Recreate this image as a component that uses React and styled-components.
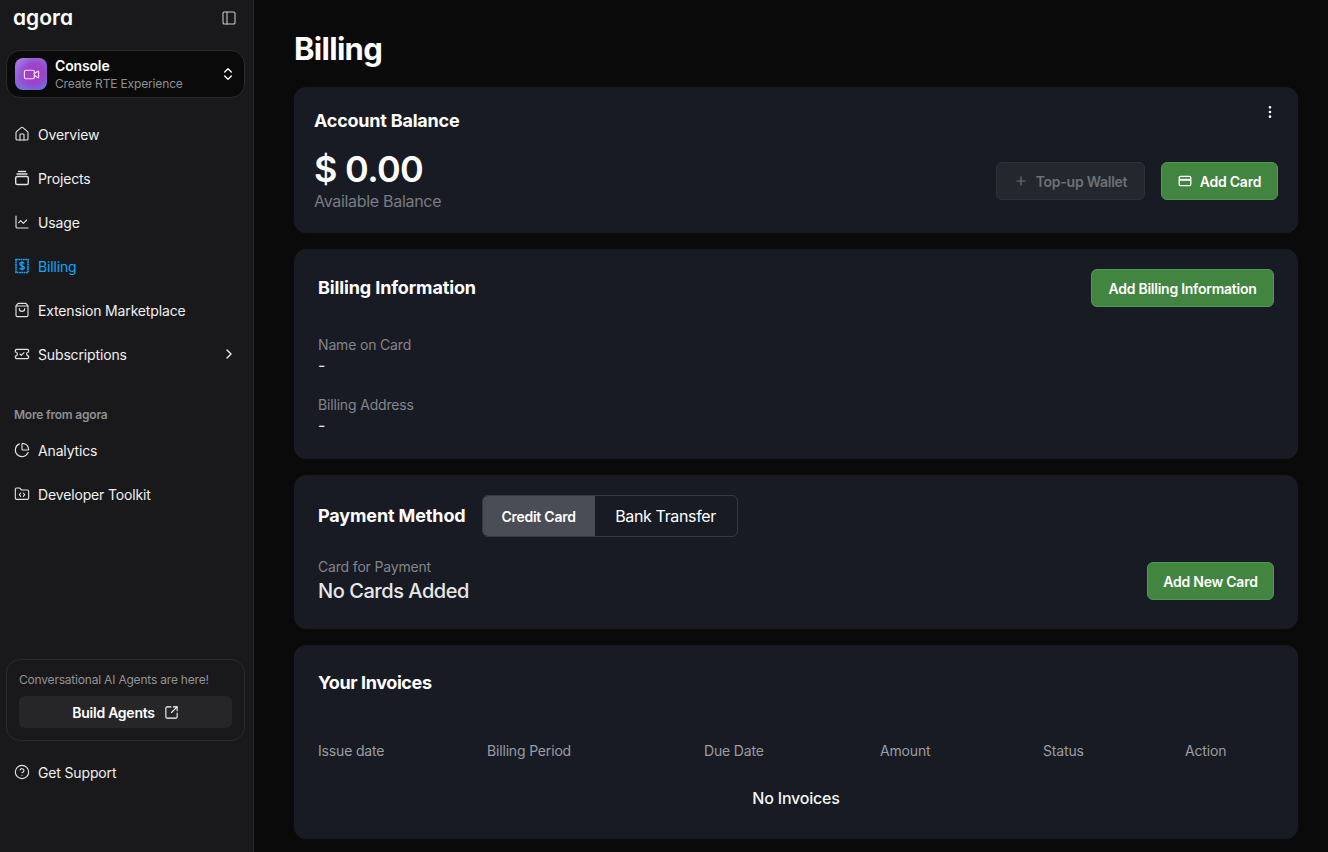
import React from 'react';
import styled, { createGlobalStyle } from 'styled-components';
import {
  PanelLeft,
  ChevronsUpDown,
  ChevronRight,
  Video,
  House,
  ChartLine,
  ShoppingBag,
  TicketCheck,
  ChartPie,
  FolderCode,
  CircleHelp,
  SquareArrowOutUpRight,
  EllipsisVertical,
  Plus,
} from 'lucide-react';

const GlobalStyle = createGlobalStyle`
  html, body {
    margin: 0;
    padding: 0;
    height: 100%;
    background: #0a0a0b;
    overflow: hidden;
  }
  body {
    font-family: Inter, "Liberation Sans", sans-serif;
    color: #fff;
  }
  * { box-sizing: border-box; }
`;

const Layout = styled.div`
  display: flex;
  height: 852px;
`;

const Sidebar = styled.aside`
  width: 254px;
  flex-shrink: 0;
  background: #19191b;
  border-right: 1px solid #2a2a2d;
  padding: 0 8px 0 6px;
  display: flex;
  flex-direction: column;
`;

const LogoRow = styled.div`
  height: 50px;
  display: flex;
  align-items: center;
  justify-content: space-between;
  padding: 0 8px 14px 7px;
  color: #c9c9cb;
`;

const Logo = styled.span`
  font-size: 21px;
  font-weight: 600;
  line-height: 1;
  color: #fff;
  letter-spacing: 0;
  font-feature-settings: 'cv11' 1;
  margin-top: -2px;
`;

const Switcher = styled.div`
  height: 48px;
  background: #0a0a0b;
  border: 1px solid #2b2b2e;
  border-radius: 14px;
  display: flex;
  align-items: center;
  padding: 0 8px;
  gap: 8px;
`;

const AppIcon = styled.div`
  width: 32px;
  height: 32px;
  border-radius: 8px;
  background: radial-gradient(circle at 60% 50%, #a23cc4 0%, #9c45cc 40%, transparent 72%),
    linear-gradient(150deg, #a97ae6 0%, #8d5ed8 50%, #4f86e4 100%);
  display: flex;
  align-items: center;
  justify-content: center;
  color: #f7dffb;
`;

const SwitcherText = styled.div`
  flex: 1;
  display: flex;
  flex-direction: column;
`;

const SwitcherTitle = styled.span`
  font-size: 14px;
  line-height: 18px;
  font-weight: 600;
  letter-spacing: -0.15px;
`;

const SwitcherSub = styled.span`
  font-size: 12px;
  line-height: 17px;
  letter-spacing: -0.15px;
  color: #8f8f94;
`;

const Nav = styled.nav`
  display: flex;
  flex-direction: column;
  margin-top: ${(p) => p.$top || 0}px;
`;

const NavItem = styled.div`
  height: 44px;
  display: flex;
  align-items: center;
  gap: 8px;
  padding: 0 8px;
  font-size: 14px;
  letter-spacing: -0.15px;
  color: ${(p) => (p.$active ? '#0aa8ff' : '#f0f0f1')};

  svg:first-child {
    color: ${(p) => (p.$active ? '#0aa8ff' : '#e2e2e4')};
    flex-shrink: 0;
  }
`;

const NavLabel = styled.span`
  flex: 1;
`;

const SectionLabel = styled.div`
  margin-top: 30px;
  padding-left: 8px;
  height: 18px;
  font-size: 12px;
  line-height: 18px;
  font-weight: 600;
  letter-spacing: -0.2px;
  color: #8f8f94;
`;

const Promo = styled.div`
  margin-top: auto;
  border: 1px solid #2b2b2e;
  border-radius: 14px;
  padding: 11px 12px;
  height: 82px;
`;

const PromoText = styled.div`
  font-size: 12px;
  line-height: 18px;
  letter-spacing: -0.2px;
  color: #929297;
`;

const PromoButton = styled.div`
  margin-top: 7px;
  height: 32px;
  background: #262628;
  border-radius: 6px;
  display: flex;
  align-items: center;
  justify-content: center;
  gap: 9px;
  font-size: 14px;
  font-weight: 600;
  letter-spacing: -0.25px;
  color: #fff;
`;

const SupportWrap = styled.div`
  margin-top: 9px;
  margin-bottom: 58px;
`;

const Main = styled.main`
  flex: 1;
  padding: 29px 30px 0 40px;
  display: flex;
  flex-direction: column;
  gap: 16px;
`;

const PageTitle = styled.h1`
  margin: 0;
  height: 42px;
  font-size: 31px;
  line-height: 40px;
  font-weight: 700;
  letter-spacing: -0.7px;
`;

const Card = styled.section`
  background: #181b23;
  border-radius: 12px;
  height: ${(p) => p.$height}px;
  padding: ${(p) => p.$padding || '20px 24px'};
  display: flex;
  flex-direction: column;
`;

const BalanceTop = styled.div`
  display: flex;
  justify-content: space-between;
  align-items: flex-start;
`;

const SectionTitle = styled.h2`
  margin: 0;
  font-size: 18px;
  line-height: 24px;
  font-weight: 700;
  letter-spacing: ${(p) => p.$spacing ?? -0.13}px;
`;

const MoreButton = styled.div`
  color: #fff;
  margin-top: -5px;
`;

const BalanceBottom = styled.div`
  display: flex;
  justify-content: space-between;
  align-items: flex-end;
`;

const Amount = styled.div`
  font-size: 36px;
  line-height: 42px;
  font-weight: 600;
  letter-spacing: -0.7px;
  margin-top: 15px;
`;

const AmountLabel = styled.div`
  font-size: 16px;
  line-height: 20px;
  margin-top: 1px;
  color: #787b82;
  letter-spacing: -0.3px;
`;

const Actions = styled.div`
  display: flex;
  gap: 16px;
  margin-bottom: 11px;
`;

const Button = styled.button`
  width: ${(p) => p.$width}px;
  height: 38px;
  padding: 0;
  display: flex;
  align-items: center;
  justify-content: center;
  gap: 8px;
  border-radius: 6px;
  font-family: inherit;
  font-size: 14px;
  font-weight: 600;
  letter-spacing: -0.25px;
  background: ${(p) => (p.$disabled ? '#24272e' : '#428541')};
  border: 1px solid ${(p) => (p.$disabled ? '#2e3138' : '#4f9a4e')};
  color: ${(p) => (p.$disabled ? '#6e7076' : '#fff')};
`;

const HeaderRow = styled.div`
  display: flex;
  align-items: center;
  justify-content: space-between;
`;

const Field = styled.div`
  margin-top: ${(p) => p.$top}px;
`;

const FieldLabel = styled.div`
  font-size: 14px;
  line-height: 20px;
  color: #82858c;
  letter-spacing: -0.17px;
`;

const FieldValue = styled.div`
  font-size: 16px;
  line-height: 20px;
  color: #e6e6e8;
`;

const PaymentHead = styled.div`
  display: flex;
  align-items: center;
  gap: 16px;
`;

const Segmented = styled.div`
  display: flex;
  height: 42px;
  border: 1px solid #363a43;
  border-radius: 6px;
  overflow: hidden;
`;

const Segment = styled.div`
  display: flex;
  align-items: center;
  justify-content: center;
  width: ${(p) => p.$width}px;
  background: ${(p) => (p.$active ? '#4a4d55' : 'transparent')};
  font-size: ${(p) => (p.$active ? 14 : 16)}px;
  font-weight: ${(p) => (p.$active ? 600 : 400)};
  letter-spacing: ${(p) => (p.$active ? -0.25 : -0.35)}px;
`;

const PaymentBottom = styled.div`
  display: flex;
  justify-content: space-between;
  align-items: center;
  margin-top: 20px;
`;

const NoCards = styled.div`
  font-size: 20px;
  line-height: 28px;
  font-weight: 500;
  letter-spacing: -0.45px;
  color: #e8e8ea;
`;

const InvoiceHead = styled.div`
  display: grid;
  grid-template-columns: 169px 217px 176px 163px 142px 1fr;
  margin-top: 46px;
  font-size: 14px;
  line-height: 20px;
  color: #9a9da4;
  letter-spacing: -0.17px;
`;

const Empty = styled.div`
  margin-top: 27px;
  text-align: center;
  font-size: 16px;
  line-height: 20px;
  font-weight: 500;
  letter-spacing: -0.2px;
  color: #f4f4f5;
`;

// lucide has no receipt with a dashed edge like the reference
const BillingIcon = () => (
  <svg width="16" height="16" viewBox="0 0 16 16" fill="none" stroke="currentColor" strokeWidth="1.6">
    <rect x="2" y="1.5" width="12" height="13" strokeDasharray="1.8 0.5" />
    <path d="M10.2 5.4c-.3-.7-1-1-2.2-1-1.3 0-2.2.5-2.2 1.6 0 2.3 4.5 1.2 4.5 3.6 0 1.1-1 1.7-2.3 1.7-1.2 0-2-.4-2.3-1.2M8 3.2v9.4" strokeWidth="1.3" />
  </svg>
);

// stacked cards
const ProjectsIcon = () => (
  <svg width="16" height="16" viewBox="0 0 16 16" fill="none" stroke="currentColor" strokeWidth="1.4" strokeLinecap="round">
    <path d="M4.5 1.5h7M3 4h10" />
    <rect x="1.7" y="6.5" width="12.6" height="8" rx="1.6" />
  </svg>
);

// card with the thick stripe
const CardIcon = () => (
  <svg width="14" height="14" viewBox="0 0 14 14" fill="none" stroke="currentColor" strokeWidth="1.3">
    <rect x="1.2" y="2.4" width="11.6" height="9.2" rx="1.4" />
    <path d="M1.2 5.8h11.6" strokeWidth="2" />
  </svg>
);

const mainNav = [
  { label: 'Overview', icon: <House size={16} strokeWidth={1.7} /> },
  { label: 'Projects', icon: <ProjectsIcon /> },
  { label: 'Usage', icon: <ChartLine size={16} strokeWidth={1.7} /> },
  { label: 'Billing', icon: <BillingIcon />, active: true },
  { label: 'Extension Marketplace', icon: <ShoppingBag size={16} strokeWidth={1.7} /> },
  { label: 'Subscriptions', icon: <TicketCheck size={16} strokeWidth={1.7} />, arrow: true },
];

const moreNav = [
  { label: 'Analytics', icon: <ChartPie size={16} strokeWidth={1.7} /> },
  { label: 'Developer Toolkit', icon: <FolderCode size={16} strokeWidth={1.7} /> },
];

const invoiceColumns = ['Issue date', 'Billing Period', 'Due Date', 'Amount', 'Status', 'Action'];

const renderNav = (items) =>
  items.map((item) => (
    <NavItem key={item.label} $active={item.active}>
      {item.icon}
      <NavLabel>{item.label}</NavLabel>
      {item.arrow && <ChevronRight size={16} />}
    </NavItem>
  ));

const App = () => {
  return (
    <Layout>
      <GlobalStyle />
      <Sidebar>
        <LogoRow>
          <Logo>agora</Logo>
          <PanelLeft size={16} strokeWidth={1.6} />
        </LogoRow>
        <Switcher>
          <AppIcon>
            <Video size={17} strokeWidth={1.7} />
          </AppIcon>
          <SwitcherText>
            <SwitcherTitle>Console</SwitcherTitle>
            <SwitcherSub>Create RTE Experience</SwitcherSub>
          </SwitcherText>
          <ChevronsUpDown size={16} />
        </Switcher>
        <Nav $top={14}>{renderNav(mainNav)}</Nav>
        <SectionLabel>More from agora</SectionLabel>
        <Nav $top={4}>{renderNav(moreNav)}</Nav>
        <Promo>
          <PromoText>Conversational AI Agents are here!</PromoText>
          <PromoButton>
            Build Agents
            <SquareArrowOutUpRight size={15} strokeWidth={1.7} />
          </PromoButton>
        </Promo>
        <SupportWrap>
          <NavItem>
            <CircleHelp size={16} strokeWidth={1.7} />
            <NavLabel>Get Support</NavLabel>
          </NavItem>
        </SupportWrap>
      </Sidebar>

      <Main>
        <PageTitle>Billing</PageTitle>

        <Card $height={146} $padding="22px 20px 0 20px">
          <BalanceTop>
            <SectionTitle $spacing={-0.22}>Account Balance</SectionTitle>
            <MoreButton>
              <EllipsisVertical size={16} />
            </MoreButton>
          </BalanceTop>
          <BalanceBottom>
            <div>
              <Amount>$ 0.00</Amount>
              <AmountLabel>Available Balance</AmountLabel>
            </div>
            <Actions>
              <Button $disabled $width={149}>
                <Plus size={14} />
                Top-up Wallet
              </Button>
              <Button $width={117}>
                <CardIcon />
                Add Card
              </Button>
            </Actions>
          </BalanceBottom>
        </Card>

        <Card $height={210}>
          <HeaderRow>
            <SectionTitle>Billing Information</SectionTitle>
            <Button $width={183}>Add Billing Information</Button>
          </HeaderRow>
          <Field $top={28}>
            <FieldLabel>Name on Card</FieldLabel>
            <FieldValue>-</FieldValue>
          </Field>
          <Field $top={20}>
            <FieldLabel>Billing Address</FieldLabel>
            <FieldValue>-</FieldValue>
          </Field>
        </Card>

        <Card $height={154}>
          <PaymentHead>
            <SectionTitle>Payment Method</SectionTitle>
            <Segmented>
              <Segment $active $width={112}>Credit Card</Segment>
              <Segment $width={142}>Bank Transfer</Segment>
            </Segmented>
          </PaymentHead>
          <PaymentBottom>
            <div>
              <FieldLabel>Card for Payment</FieldLabel>
              <NoCards>No Cards Added</NoCards>
            </div>
            <Button $width={127}>Add New Card</Button>
          </PaymentBottom>
        </Card>

        <Card $height={194} $padding="26px 24px">
          <SectionTitle $spacing={-0.4}>Your Invoices</SectionTitle>
          <InvoiceHead>
            {invoiceColumns.map((col) => (
              <span key={col}>{col}</span>
            ))}
          </InvoiceHead>
          <Empty>No Invoices</Empty>
        </Card>
      </Main>
    </Layout>
  );
};

export default App;
